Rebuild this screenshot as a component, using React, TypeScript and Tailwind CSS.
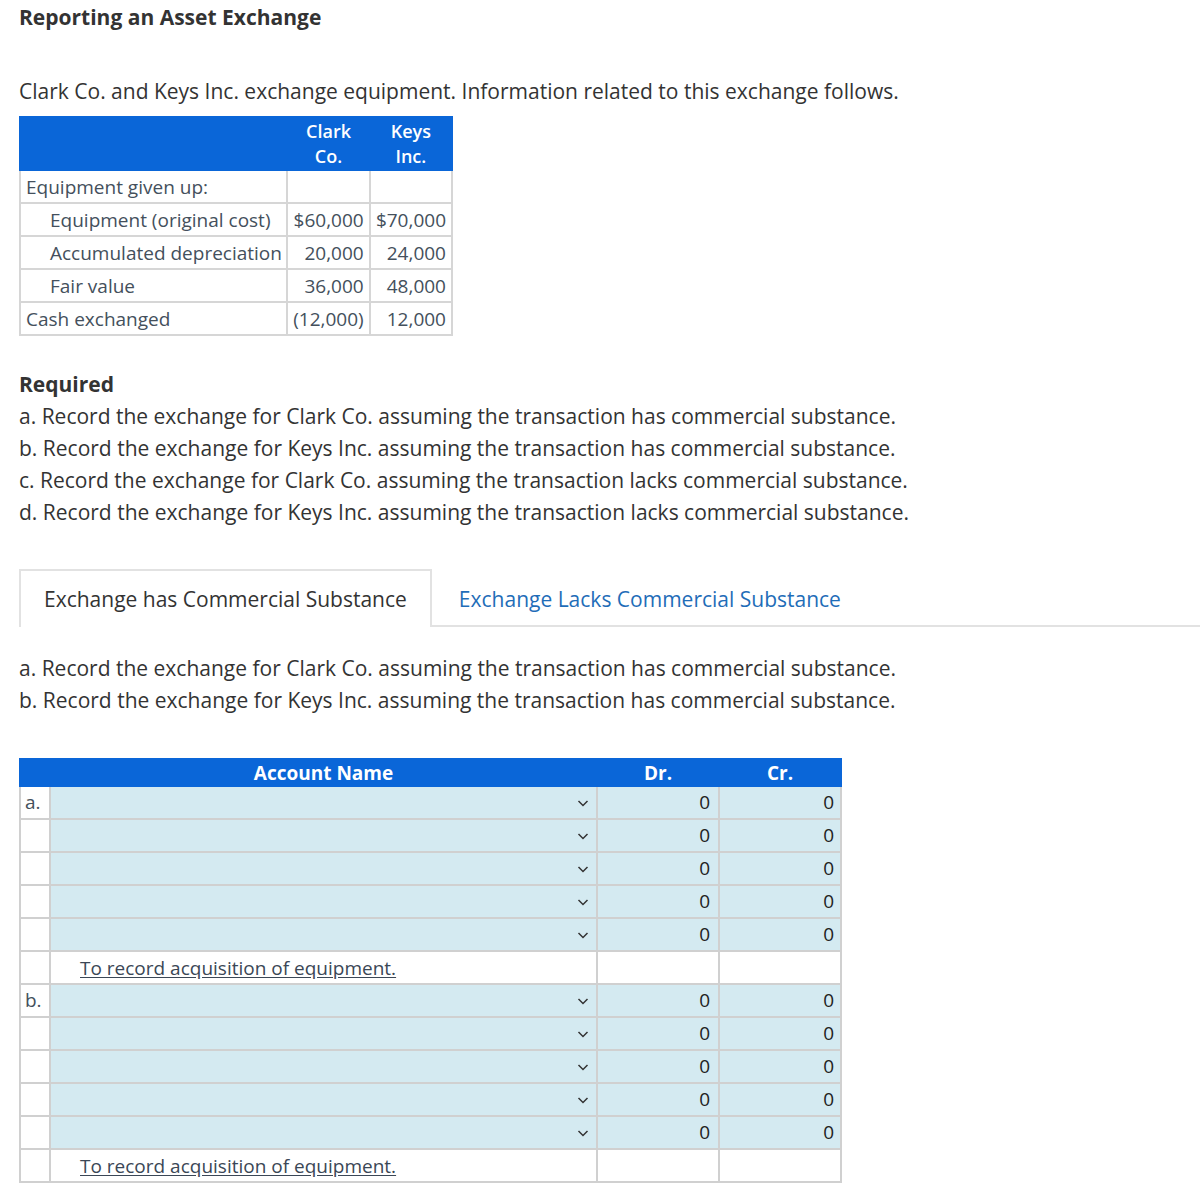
import React from "react";

const info = [
  { label: "Equipment given up:", indent: false, clark: "", keys: "" },
  { label: "Equipment (original cost)", indent: true, clark: "$60,000", keys: "$70,000" },
  { label: "Accumulated depreciation", indent: true, clark: "20,000", keys: "24,000" },
  { label: "Fair value", indent: true, clark: "36,000", keys: "48,000" },
  { label: "Cash exchanged", indent: false, clark: "(12,000)", keys: "12,000" },
];

const required = [
  "a. Record the exchange for Clark Co. assuming the transaction has commercial substance.",
  "b. Record the exchange for Keys Inc. assuming the transaction has commercial substance.",
  "c. Record the exchange for Clark Co. assuming the transaction lacks commercial substance.",
  "d. Record the exchange for Keys Inc. assuming the transaction lacks commercial substance.",
];

function Chevron() {
  return (
    <svg width="14" height="14" viewBox="0 0 14 14" fill="none" className="shrink-0">
      <path d="M2.5 5 L7 9.5 L11.5 5" stroke="#333" strokeWidth="1.5" />
    </svg>
  );
}

function EntryBlock({ tag }: { tag: string }) {
  const rows = [0, 1, 2, 3, 4];
  return (
    <>
      {rows.map((i) => (
        <tr key={i} className="h-[33px]">
          <td className="border-2 border-[#d0d0d0] bg-white px-1 align-middle text-[19px] text-[#44505c]">
            {i === 0 ? tag : ""}
          </td>
          <td className="border-2 border-[#d0d0d0] bg-[#d4eaf1] pr-[6px]">
            <div className="flex justify-end">
              <Chevron />
            </div>
          </td>
          <td className="border-2 border-[#d0d0d0] bg-[#d4eaf1] pr-[8px] text-right text-[19px] text-[#222]">0</td>
          <td className="border-2 border-[#d0d0d0] bg-[#d4eaf1] pr-[6px] text-right text-[19px] text-[#222]">0</td>
        </tr>
      ))}
      <tr className="h-[33px]">
        <td className="border-2 border-[#d0d0d0] bg-white"></td>
        <td className="border-2 border-[#d0d0d0] bg-white pl-[29px] text-[19px] leading-[26px] text-[#3b4756]">
          <span className="underline underline-offset-2">To record acquisition of equipment.</span>
        </td>
        <td className="border-2 border-[#d0d0d0] bg-white"></td>
        <td className="border-2 border-[#d0d0d0] bg-white"></td>
      </tr>
    </>
  );
}

export default function App() {
  return (
    <div className="min-h-screen bg-white pl-[19px] pt-[3px] font-['Open_Sans',sans-serif] text-[#333]">
      <h1 className="text-[21px] font-bold leading-[28px] text-[#333]">Reporting an Asset Exchange</h1>

      <p className="mt-[45px] text-[21px] leading-[30px]">
        Clark Co. and Keys Inc. exchange equipment. Information related to this exchange follows.
      </p>

      <table className="mt-[10px] w-[434px] border-collapse text-[19px] text-[#44505c]">
        <thead>
          <tr className="h-[53px] bg-[#0a66d8] text-white">
            <th className="border-2 border-[#0a66d8] w-[268px]"></th>
            <th className="border-2 border-[#0a66d8] w-[83px] text-center text-[18px] font-semibold leading-[25px]">
              Clark
              <br />
              Co.
            </th>
            <th className="border-2 border-[#0a66d8] w-[83px] text-center text-[18px] font-semibold leading-[25px]">
              Keys
              <br />
              Inc.
            </th>
          </tr>
        </thead>
        <tbody>
          {info.map((r) => (
            <tr key={r.label} className="h-[33px]">
              <td className={`border-2 border-[#d6d6d6] ${r.indent ? "pl-[29px]" : "pl-[5px]"} whitespace-nowrap leading-[26px]`}>
                {r.label}
              </td>
              <td className="border-2 border-[#d6d6d6] pr-[5px] text-right whitespace-nowrap leading-[26px]">{r.clark}</td>
              <td className="border-2 border-[#d6d6d6] pr-[5px] text-right whitespace-nowrap leading-[26px]">{r.keys}</td>
            </tr>
          ))}
        </tbody>
      </table>

      <div className="mt-[32px]">
        <div className="text-[21px] font-bold leading-[32px] text-[#333]">Required</div>
        {required.map((t) => (
          <p key={t} className="text-[21px] leading-[32px]">
            {t}
          </p>
        ))}
      </div>

      <div className="mt-[41px] flex items-end">
        <div className="flex h-[58px] items-center border-2 border-b-0 border-[#e2e2e2] bg-white px-[23px] pt-[2px] text-[21px] text-[#333]">
          Exchange has Commercial Substance
        </div>
        <div className="flex h-[58px] flex-1 items-center border-b-2 border-[#e2e2e2] px-[27px] pt-[5px] text-[21px] text-[#1f6db8]">
          Exchange Lacks Commercial Substance
        </div>
      </div>

      <div className="mt-[25px]">
        <p className="text-[21px] leading-[32px]">{required[0]}</p>
        <p className="text-[21px] leading-[32px]">{required[1]}</p>
      </div>

      <table className="mt-[42px] mb-[20px] w-[821px] table-fixed border-collapse">
        <colgroup>
          <col className="w-[30px]" />
          <col className="w-[547px]" />
          <col className="w-[122px]" />
          <col className="w-[122px]" />
        </colgroup>
        <thead>
          <tr className="h-[27px] bg-[#0a66d8] text-[19px] font-bold leading-[22px] text-white">
            <th className="border-2 border-[#0a66d8] text-center"></th>
            <th className="border-2 border-[#0a66d8] text-center">Account Name</th>
            <th className="border-2 border-[#0a66d8] text-center">Dr.</th>
            <th className="border-2 border-[#0a66d8] text-center">Cr.</th>
          </tr>
        </thead>
        <tbody>
          <EntryBlock tag="a." />
          <EntryBlock tag="b." />
        </tbody>
      </table>
    </div>
  );
}
